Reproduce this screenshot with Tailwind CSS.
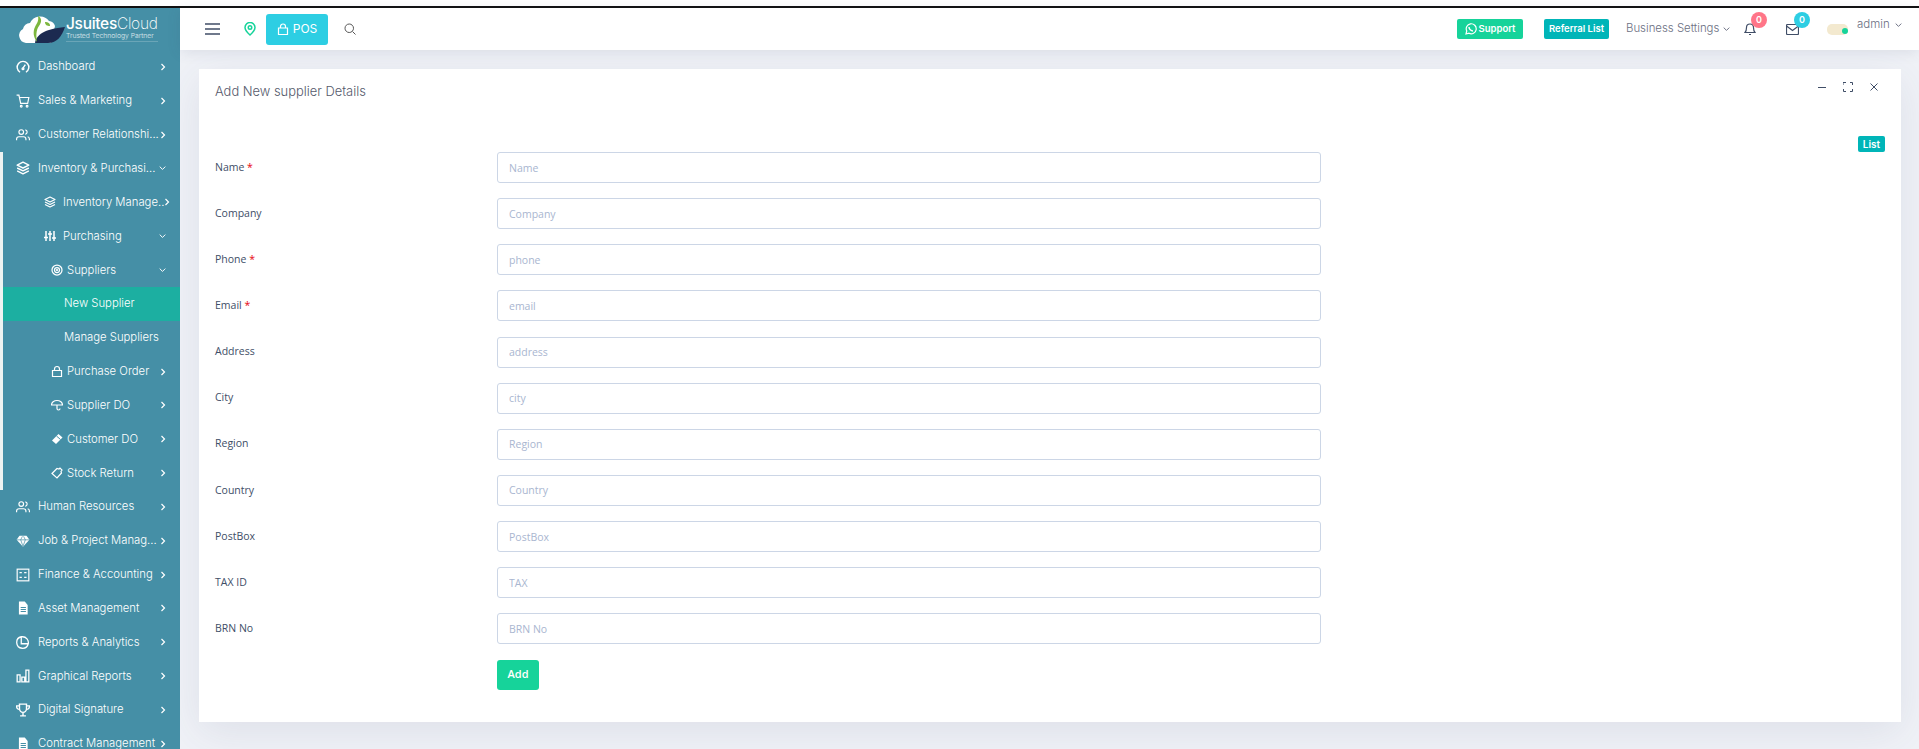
<!DOCTYPE html>
<html lang="en">
<head>
  <meta charset="UTF-8" />
  <title>Add New supplier | JsuitesCloud</title>
  <script src="https://cdn.jsdelivr.net/npm/@tailwindcss/browser@4"></script>
</head>

<body class="h-[749px] overflow-hidden bg-[#f0f2f7] font-['Inter',sans-serif]">

<!-- shared icons -->
<svg class="hidden">
  <symbol id="right" viewBox="0 0 8 10"><path d="M2 1l4 4-4 4" fill="none" stroke="currentColor" stroke-width="1.6"/></symbol>
  <symbol id="down" viewBox="0 0 10 8"><path d="M1 2l4 4 4-4" fill="none" stroke="currentColor" stroke-width="1.4"/></symbol>
  <symbol id="users" viewBox="0 0 24 24"><g fill="none" stroke="currentColor" stroke-width="2"><path d="M17 21v-2a4 4 0 0 0-4-4H5a4 4 0 0 0-4 4v2"/><circle cx="9" cy="7" r="4"/><path d="M23 21v-2a4 4 0 0 0-3-3.9M16 3.1a4 4 0 0 1 0 7.8"/></g></symbol>
  <symbol id="layers" viewBox="0 0 24 24"><g fill="none" stroke="currentColor" stroke-width="2.400" stroke-linejoin="round"><path d="M12 2L2 7l10 5 10-5z"/><path d="M2 17l10 5 10-5M2 12l10 5 10-5"/></g></symbol>
  <symbol id="doc" viewBox="0 0 24 24"><path d="M5 1h10l5 6v16H5z" fill="#fff"/><path d="M8 11h9M8 14.500h9M8 18h9" stroke="#458fa6" stroke-width="1.800"/></symbol>
</svg>

<div class="h-[6px] bg-white"></div>
<div class="h-[2px] bg-[#111]"></div>

<div class="flex h-[741px]">

  <!-- Sidebar -->
  <aside class="w-[180px] shrink-0 bg-[#458fa6] text-white text-[11.300px] font-light overflow-hidden z-10">
    <div class="h-[42px] flex items-center pl-[18px] bg-[#458fa6]">
      <svg class="w-[47px] h-[31px] shrink-0" viewBox="0 0 47 31">
        <path d="M8 29a7.500 7.500 0 0 1-3-14 7 7 0 0 1 7-6 11 11 0 0 1 19-2 7 7 0 0 1 6 5l-4 17z" fill="#fff"/>
        <path d="M17 29c1-8 9-14 30-16-3 9-8 16-17 16z" fill="#1c2a50"/>
        <path d="M20 2c4 2 4 6 1 10s-3 10-2 16c-4-5-4-11-2-15 2-4 4-6 3-11z" fill="#7cb63e"/>
        <path d="M27 8c3 0 5 1 5 4-3 0-5-1-5-4z" fill="#7cb63e"/>
      </svg>
      <div class="ml-[1px] leading-none">
        <div class="text-[15.500px] tracking-[-0.3px] h-[16px] whitespace-nowrap"><span class="font-medium">Jsuites</span><span class="font-extralight">Cloud</span></div>
        <div class="text-[6.800px] mt-[1px] text-white/80 whitespace-nowrap border-b border-white/20 pb-[1px]">Trusted Technology Partner</div>
      </div>
    </div>

    <nav>
      <a class="h-[33.850px] flex items-center pl-[16px] pr-[14px]">
        <svg class="w-[14px] h-[14px] shrink-0" viewBox="0 0 24 24" fill="none" stroke="currentColor" stroke-width="2.400"><path d="M7 21a10 10 0 1 1 10 0M12 14l4-6"/><circle cx="12" cy="15" r="1.500"/></svg>
        <span class="ml-[8px] flex-1 whitespace-nowrap">Dashboard</span>
        <svg class="w-[6px] h-[8px] shrink-0"><use href="#right"/></svg>
      </a>
      <a class="h-[33.850px] flex items-center pl-[16px] pr-[14px]">
        <svg class="w-[14px] h-[14px] shrink-0" viewBox="0 0 24 24" fill="none" stroke="currentColor" stroke-width="2"><path d="M1 2h4l3 14h12l2-10H7"/><circle cx="9" cy="21" r="1.500"/><circle cx="19" cy="21" r="1.500"/></svg>
        <span class="ml-[8px] flex-1 whitespace-nowrap">Sales &amp; Marketing</span>
        <svg class="w-[6px] h-[8px] shrink-0"><use href="#right"/></svg>
      </a>
      <a class="h-[33.850px] flex items-center pl-[16px] pr-[14px]">
        <svg class="w-[14px] h-[14px] shrink-0"><use href="#users"/></svg>
        <span class="ml-[8px] flex-1 whitespace-nowrap">Customer Relationshi...</span>
        <svg class="w-[6px] h-[8px] shrink-0"><use href="#right"/></svg>
      </a>

      <!-- open group, white rule on the left -->
      <div class="border-l-[3px] border-[#eef3f2]">
        <a class="h-[33.850px] flex items-center pl-[13px] pr-[14px]">
          <svg class="w-[14px] h-[14px] shrink-0"><use href="#layers"/></svg>
          <span class="ml-[8px] flex-1 whitespace-nowrap">Inventory &amp; Purchasi...</span>
          <svg class="w-[7px] h-[6px] shrink-0"><use href="#down"/></svg>
        </a>
        <a class="h-[33.850px] flex items-center pl-[41px] pr-[14px]">
          <svg class="w-[12px] h-[12px] shrink-0"><use href="#layers"/></svg>
          <span class="ml-[7px] flex-1 whitespace-nowrap">Inventory Manage..</span>
          <svg class="w-[6px] h-[8px] shrink-0"><use href="#right"/></svg>
        </a>
        <a class="h-[33.850px] flex items-center pl-[41px] pr-[14px]">
          <svg class="w-[12px] h-[12px] shrink-0" viewBox="0 0 24 24" fill="none" stroke="currentColor" stroke-width="3"><path d="M4 2v20M12 2v20M20 2v20M0 15h8M8 8h8M16 16h8"/></svg>
          <span class="ml-[7px] flex-1 whitespace-nowrap">Purchasing</span>
          <svg class="w-[7px] h-[6px] shrink-0"><use href="#down"/></svg>
        </a>
        <a class="h-[33.850px] flex items-center pl-[48px] pr-[14px]">
          <svg class="w-[12px] h-[12px] shrink-0" viewBox="0 0 24 24" fill="none" stroke="currentColor" stroke-width="2.500"><circle cx="12" cy="12" r="10"/><circle cx="12" cy="12" r="5"/><circle cx="12" cy="12" r="1"/></svg>
          <span class="ml-[4px] flex-1 whitespace-nowrap">Suppliers</span>
          <svg class="w-[7px] h-[6px] shrink-0"><use href="#down"/></svg>
        </a>
        <a class="h-[33.850px] flex items-center pl-[61px] bg-[#1cafa1]">New Supplier</a>
        <a class="h-[33.850px] flex items-center pl-[61px]">Manage Suppliers</a>
        <a class="h-[33.850px] flex items-center pl-[48px] pr-[14px]">
          <svg class="w-[12px] h-[13px] shrink-0" viewBox="0 0 24 24" fill="none" stroke="currentColor" stroke-width="2.400"><path d="M3 10h18v12H3zM7 10V7a5 5 0 0 1 10 0v3"/></svg>
          <span class="ml-[4px] flex-1 whitespace-nowrap">Purchase Order</span>
          <svg class="w-[6px] h-[8px] shrink-0"><use href="#right"/></svg>
        </a>
        <a class="h-[33.850px] flex items-center pl-[48px] pr-[14px]">
          <svg class="w-[12px] h-[12px] shrink-0" viewBox="0 0 24 24" fill="none" stroke="currentColor" stroke-width="2.400"><path d="M23 12a11 9 0 0 0-22 0zM12 12v7a3 3 0 0 0 6 0"/></svg>
          <span class="ml-[4px] flex-1 whitespace-nowrap">Supplier DO</span>
          <svg class="w-[6px] h-[8px] shrink-0"><use href="#right"/></svg>
        </a>
        <a class="h-[33.850px] flex items-center pl-[48px] pr-[14px]">
          <svg class="w-[12px] h-[12px] shrink-0" viewBox="0 0 24 24" fill="currentColor"><path d="M15 2l8 7L10 22l-8-7z"/><path d="M11 6l8 7" stroke="#458fa6" stroke-width="2"/></svg>
          <span class="ml-[4px] flex-1 whitespace-nowrap">Customer DO</span>
          <svg class="w-[6px] h-[8px] shrink-0"><use href="#right"/></svg>
        </a>
        <a class="h-[33.850px] flex items-center pl-[48px] pr-[14px]">
          <svg class="w-[12px] h-[12px] shrink-0" viewBox="0 0 24 24" fill="none" stroke="currentColor" stroke-width="2.400"><path d="M2 13l10-10 4 1 2-2 4 4-2 3 1 3-9 10z"/></svg>
          <span class="ml-[4px] flex-1 whitespace-nowrap">Stock Return</span>
          <svg class="w-[6px] h-[8px] shrink-0"><use href="#right"/></svg>
        </a>
      </div>

      <a class="h-[33.850px] flex items-center pl-[16px] pr-[14px]">
        <svg class="w-[14px] h-[14px] shrink-0"><use href="#users"/></svg>
        <span class="ml-[8px] flex-1 whitespace-nowrap">Human Resources</span>
        <svg class="w-[6px] h-[8px] shrink-0"><use href="#right"/></svg>
      </a>
      <a class="h-[33.850px] flex items-center pl-[16px] pr-[14px]">
        <svg class="w-[14px] h-[14px] shrink-0" viewBox="0 0 24 24" fill="currentColor"><path d="M6 3h12l5 7-11 12L1 10z"/><path d="M1 10h22M8 10l4 11 4-11M8 10l3-6M16 10l-3-6" fill="none" stroke="#458fa6" stroke-width="1.200"/></svg>
        <span class="ml-[8px] flex-1 whitespace-nowrap">Job &amp; Project Manag...</span>
        <svg class="w-[6px] h-[8px] shrink-0"><use href="#right"/></svg>
      </a>
      <a class="h-[33.850px] flex items-center pl-[16px] pr-[14px]">
        <svg class="w-[14px] h-[14px] shrink-0" viewBox="0 0 24 24" fill="none" stroke="currentColor" stroke-width="2"><rect x="2" y="2" width="20" height="20"/><path d="M6 8h4M14 8h4M6 16h4M14 16h4"/></svg>
        <span class="ml-[8px] flex-1 whitespace-nowrap">Finance &amp; Accounting</span>
        <svg class="w-[6px] h-[8px] shrink-0"><use href="#right"/></svg>
      </a>
      <a class="h-[33.850px] flex items-center pl-[16px] pr-[14px]">
        <svg class="w-[14px] h-[14px] shrink-0"><use href="#doc"/></svg>
        <span class="ml-[8px] flex-1 whitespace-nowrap">Asset Management</span>
        <svg class="w-[6px] h-[8px] shrink-0"><use href="#right"/></svg>
      </a>
      <a class="h-[33.850px] flex items-center pl-[16px] pr-[14px]">
        <svg class="w-[14px] h-[14px] shrink-0" viewBox="0 0 24 24" fill="none" stroke="currentColor" stroke-width="2.200"><path d="M9 3a10 10 0 1 0 12 12H9zM9 3h2a10 10 0 0 1 10 12"/></svg>
        <span class="ml-[8px] flex-1 whitespace-nowrap">Reports &amp; Analytics</span>
        <svg class="w-[6px] h-[8px] shrink-0"><use href="#right"/></svg>
      </a>
      <a class="h-[33.850px] flex items-center pl-[16px] pr-[14px]">
        <svg class="w-[14px] h-[14px] shrink-0" viewBox="0 0 24 24" fill="none" stroke="currentColor" stroke-width="2.200"><path d="M2 10h5v12H2zM10 14h5v8h-5zM17 2h5v20h-5z"/></svg>
        <span class="ml-[8px] flex-1 whitespace-nowrap">Graphical Reports</span>
        <svg class="w-[6px] h-[8px] shrink-0"><use href="#right"/></svg>
      </a>
      <a class="h-[33.850px] flex items-center pl-[16px] pr-[14px]">
        <svg class="w-[14px] h-[14px] shrink-0" viewBox="0 0 24 24" fill="none" stroke="currentColor" stroke-width="2.400"><path d="M6 2h12v8a6 6 0 0 1-12 0zM6 5H1c0 4 2 6 5 6M18 5h5c0 4-2 6-5 6M12 16v5M7 22h10"/></svg>
        <span class="ml-[8px] flex-1 whitespace-nowrap">Digital Signature</span>
        <svg class="w-[6px] h-[8px] shrink-0"><use href="#right"/></svg>
      </a>
      <a class="h-[33.850px] flex items-center pl-[16px] pr-[14px]">
        <svg class="w-[14px] h-[14px] shrink-0"><use href="#doc"/></svg>
        <span class="ml-[8px] flex-1 whitespace-nowrap">Contract Management</span>
        <svg class="w-[6px] h-[8px] shrink-0"><use href="#right"/></svg>
      </a>
    </nav>
  </aside>

  <div class="flex-1 min-w-0 flex flex-col">

    <!-- Navbar -->
    <header class="h-[42px] shrink-0 bg-white shadow-[0_2px_14px_rgba(60,70,110,0.12)] flex items-center pl-[25px] pr-[17px] text-[#6b6f82] z-10">
      <svg class="w-[15px] h-[12px]" viewBox="0 0 15 12" stroke="#404e67" stroke-width="1.500"><path d="M0 1h15M0 6h15M0 11h15"/></svg>
      <svg class="ml-[24px] w-[12px] h-[14px]" viewBox="0 0 24 28" fill="none" stroke="#16d39a" stroke-width="3"><path d="M12 26S2 17 2 11a10 10 0 0 1 20 0c0 6-10 15-10 15z"/><circle cx="12" cy="11" r="3.500"/></svg>
      <button class="ml-[10px] w-[62px] h-[31px] rounded-[3px] bg-[#2dcee3] text-white text-[12px] flex items-center justify-center">
        <svg class="w-[12px] h-[13px] mr-[4px]" viewBox="0 0 24 24" fill="none" stroke="currentColor" stroke-width="2.400"><path d="M3 9h18v13H3zM7 9V6a5 5 0 0 1 10 0v3"/></svg>POS
      </button>
      <svg class="ml-[16px] w-[12px] h-[12px]" viewBox="0 0 24 24" fill="none" stroke="#555" stroke-width="2"><circle cx="10.500" cy="10.500" r="8.500"/><path d="M17 17l6 6"/></svg>

      <a class="ml-auto w-[66px] h-[20px] rounded-[2px] bg-[#16d39a] text-white text-[9.500px] font-semibold flex items-center justify-center gap-[2px]">
        <svg class="w-[12px] h-[12px]" viewBox="0 0 24 24" fill="none" stroke="currentColor" stroke-width="2.400"><path d="M2 22l1.500-6A10 10 0 1 1 8 20.500z"/><path d="M8 8c0 4 4 8 8 8" stroke-width="3"/></svg>Support
      </a>
      <a class="ml-[21px] w-[65px] h-[20px] rounded-[2px] bg-[#00b5b8] text-white text-[9.500px] font-semibold flex items-center justify-center">Referral List</a>
      <span class="ml-[17px] w-[93px] text-[11.400px] font-light whitespace-nowrap">Business Settings</span>
      <svg class="ml-[4px] w-[7px] h-[6px]"><use href="#down"/></svg>

      <span class="relative ml-[14px] w-[12px] h-[14px]">
        <svg class="w-[12px] h-[14px]" viewBox="0 0 24 28" fill="none" stroke="#404e67" stroke-width="2.400"><path d="M2 21h20c-3-3-3-6-3-10a7 7 0 0 0-14 0c0 4 0 7-3 10zM10 25h4"/></svg>
        <span class="absolute -top-[10px] left-[7px] w-[16px] h-[16px] rounded-full bg-[#ff7588] text-white text-[9px] font-semibold flex items-center justify-center">0</span>
      </span>
      <span class="relative ml-[30px] w-[13px] h-[11px]">
        <svg class="block w-[13px] h-[11px]" viewBox="0 0 26 22" fill="none" stroke="#404e67" stroke-width="2.400"><rect x="1" y="1" width="24" height="20" rx="2"/><path d="M1 4l12 9 12-9"/></svg>
        <span class="absolute -top-[12px] left-[8px] w-[16px] h-[16px] rounded-full bg-[#2dcee3] text-white text-[9px] font-semibold flex items-center justify-center">0</span>
      </span>
      <span class="relative ml-[28px] w-[21px] h-[11px] rounded-[5px] bg-[#f3e9cf]">
        <span class="absolute top-[4px] right-0 w-[6px] h-[6px] rounded-full bg-[#16d39a]"></span>
      </span>
      <span class="ml-[9px] -mt-[9px] w-[35px] text-[11.500px] font-light">admin</span>
      <svg class="ml-[3px] -mt-[9px] w-[7px] h-[6px]"><use href="#down"/></svg>
    </header>

    <!-- Card -->
    <main class="pt-[19px] pl-[19px] pr-[18px]">
      <section class="relative h-[653px] bg-white pt-[15px] pl-[16px] shadow-[0_10px_40px_rgba(60,70,110,0.10)]">
        <h1 class="text-[12.900px] font-light text-[#565a6c] leading-[15px]">Add New supplier Details</h1>

        <div class="absolute top-[12px] right-[23px] flex items-center gap-[17px] text-[#404e67]">
          <svg class="w-[8px] h-[12px]" viewBox="0 0 8 12" stroke="currentColor"><path d="M0 6.500h8"/></svg>
          <svg class="w-[10px] h-[10px]" viewBox="0 0 10 10" fill="none" stroke="currentColor"><path d="M0 3V.5h3M7 .5h2.500V3M9.500 7v2.500H7M3 9.500H.5V7"/></svg>
          <svg class="w-[8px] h-[8px]" viewBox="0 0 8 8" stroke="currentColor"><path d="M.5.5l7 7M7.500.5l-7 7"/></svg>
        </div>

        <a class="absolute top-[67px] right-[16px] w-[27px] h-[16px] rounded-[2px] bg-[#00b5b8] text-white text-[10px] font-semibold flex items-center justify-center">List</a>

        <form class="mt-[53px] font-['Open_Sans',sans-serif] text-[10.500px] text-[#404e67]">
          <div class="flex items-center h-[31px] mb-[15.150px]">
            <label class="w-[282px]">Name <span class="text-red-600">*</span></label>
            <input class="w-[824px] h-full border border-[#ccd6e6] rounded-[3px] px-[11px] placeholder:text-[#a9b6d0]" placeholder="Name" />
          </div>
          <div class="flex items-center h-[31px] mb-[15.150px]">
            <label class="w-[282px]">Company</label>
            <input class="w-[824px] h-full border border-[#ccd6e6] rounded-[3px] px-[11px] placeholder:text-[#a9b6d0]" placeholder="Company" />
          </div>
          <div class="flex items-center h-[31px] mb-[15.150px]">
            <label class="w-[282px]">Phone <span class="text-red-600">*</span></label>
            <input class="w-[824px] h-full border border-[#ccd6e6] rounded-[3px] px-[11px] placeholder:text-[#a9b6d0]" placeholder="phone" />
          </div>
          <div class="flex items-center h-[31px] mb-[15.150px]">
            <label class="w-[282px]">Email <span class="text-red-600">*</span></label>
            <input class="w-[824px] h-full border border-[#ccd6e6] rounded-[3px] px-[11px] placeholder:text-[#a9b6d0]" placeholder="email" />
          </div>
          <div class="flex items-center h-[31px] mb-[15.150px]">
            <label class="w-[282px]">Address</label>
            <input class="w-[824px] h-full border border-[#ccd6e6] rounded-[3px] px-[11px] placeholder:text-[#a9b6d0]" placeholder="address" />
          </div>
          <div class="flex items-center h-[31px] mb-[15.150px]">
            <label class="w-[282px]">City</label>
            <input class="w-[824px] h-full border border-[#ccd6e6] rounded-[3px] px-[11px] placeholder:text-[#a9b6d0]" placeholder="city" />
          </div>
          <div class="flex items-center h-[31px] mb-[15.150px]">
            <label class="w-[282px]">Region</label>
            <input class="w-[824px] h-full border border-[#ccd6e6] rounded-[3px] px-[11px] placeholder:text-[#a9b6d0]" placeholder="Region" />
          </div>
          <div class="flex items-center h-[31px] mb-[15.150px]">
            <label class="w-[282px]">Country</label>
            <input class="w-[824px] h-full border border-[#ccd6e6] rounded-[3px] px-[11px] placeholder:text-[#a9b6d0]" placeholder="Country" />
          </div>
          <div class="flex items-center h-[31px] mb-[15.150px]">
            <label class="w-[282px]">PostBox</label>
            <input class="w-[824px] h-full border border-[#ccd6e6] rounded-[3px] px-[11px] placeholder:text-[#a9b6d0]" placeholder="PostBox" />
          </div>
          <div class="flex items-center h-[31px] mb-[15.150px]">
            <label class="w-[282px]">TAX ID</label>
            <input class="w-[824px] h-full border border-[#ccd6e6] rounded-[3px] px-[11px] placeholder:text-[#a9b6d0]" placeholder="TAX" />
          </div>
          <div class="flex items-center h-[31px] mb-[15.150px]">
            <label class="w-[282px]">BRN No</label>
            <input class="w-[824px] h-full border border-[#ccd6e6] rounded-[3px] px-[11px] placeholder:text-[#a9b6d0]" placeholder="BRN No" />
          </div>
          <button type="button" class="ml-[282px] w-[42px] h-[30px] rounded-[3px] bg-[#16d39a] text-white text-[11px] font-semibold">Add</button>
        </form>
      </section>
    </main>
  </div>
</div>

</body>
</html>
